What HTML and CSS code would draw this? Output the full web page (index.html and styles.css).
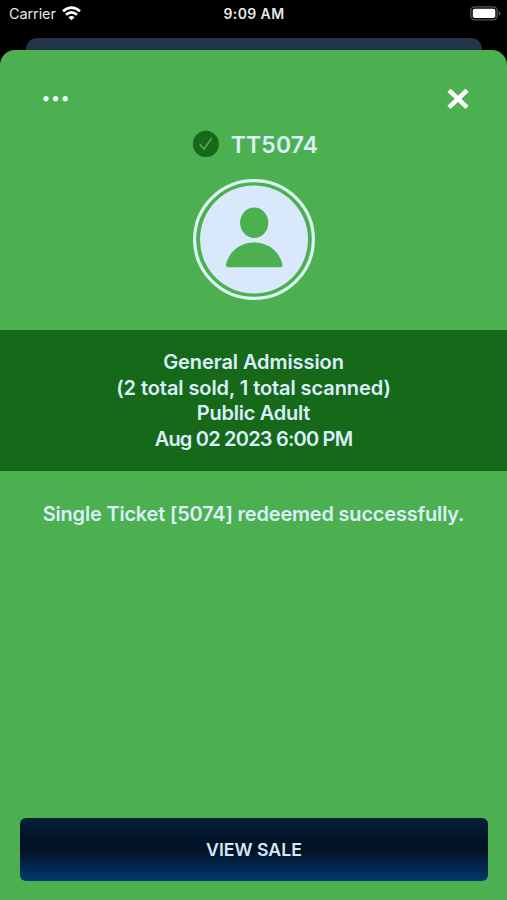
FILE: index.html
```html
<!DOCTYPE html>
<html lang="en">
<head>
<meta charset="utf-8">
<title>Ticket scan</title>
<link rel="stylesheet" href="styles.css">
</head>
<body>
<header class="status">
  <div class="carrier"><span>Carrier</span>
    <svg class="wifi" width="19" height="15" viewBox="0 0 19 15"><g fill="none" stroke="#fff" stroke-width="2.8"><path d="M1 5.300Q9.500-2 18 5.300"/><path d="M4 8.700Q9.500 4.100 15 8.700"/></g><path d="M6.400 11.200Q9.500 8.700 12.600 11.200L9.500 14.300Z" fill="#fff"/></svg>
  </div>
  <span class="time">9:09 AM</span>
  <svg class="battery" width="31" height="15" viewBox="0 0 31 15"><rect x=".8" y=".8" width="26.4" height="13" rx="3.8" fill="none" stroke="#555" stroke-width="1.3"/><rect x="2.8" y="2.7" width="22.5" height="9.3" rx="1.8" fill="#fff"/><path d="M28.800 5Q32 7.300 28.800 9.700Z" fill="#666"/></svg>
</header>
<div class="back-card"></div>
<main class="sheet">
  <div class="toolbar">
    <svg width="26" height="6" viewBox="0 0 26 6" fill="#e2f8fc"><circle cx="3" cy="2.700" r="2.700"/><circle cx="12.600" cy="2.700" r="2.700"/><circle cx="22.200" cy="2.700" r="2.700"/></svg>
    <svg width="22" height="20" viewBox="0 0 22 20"><path d="M2 1.300 20 18.300M20 1.300 2 18.300" stroke="#fff" stroke-width="4.600"/></svg>
  </div>
  <div class="ticket">
    <svg width="27" height="27" viewBox="0 0 27 27"><circle cx="13.900" cy="13.900" r="13.100" fill="#17691a"/><path d="M8.200 14.700 12.100 19.200 19.400 8.400" fill="none" stroke="#4caf50" stroke-width="1.600" stroke-linecap="round" stroke-linejoin="round"/></svg>
    <h1>TT5074</h1>
  </div>
  <svg class="avatar" width="122" height="121" viewBox="0 0 122 121"><ellipse cx="61" cy="60.500" rx="59.400" ry="58.900" fill="none" stroke="#d9f8f6" stroke-width="3.200"/><ellipse cx="61" cy="60.500" rx="54" ry="54" fill="#d9e9fb"/><ellipse cx="61.200" cy="43.800" rx="14.100" ry="15.200" fill="#4caf50"/><path d="M33 85.200C37 71 48 63.500 61.200 63.500S85.500 71 89.400 85.200Q90 88.300 87 88.300H35.500Q32.400 88.300 33 85.200Z" fill="#4caf50"/></svg>
  <section class="details">
    <p class="ticket-type">General Admission</p>
    <p class="counts">(2 total sold, 1 total scanned)</p>
    <p class="audience">Public Adult</p>
    <p class="date">Aug 02 2023 6:00 PM</p>
  </section>
  <p class="message">Single Ticket [5074] redeemed successfully.</p>
  <button class="sale">VIEW SALE</button>
</main>
</body>
</html>
```
FILE: styles.css
```css
* { box-sizing: border-box; }
body {
  margin: 0;
  width: 507px;
  height: 900px;
  display: flex;
  flex-direction: column;
  background: #000;
  color: #d9effa;
  font-family: Inter, "Liberation Sans", sans-serif;
  overflow: hidden;
}
p, h1 { margin: 0; white-space: nowrap; }
svg { display: block; flex: none; }
.status {
  height: 38px;
  padding: 5px 6px 0 9px;
  display: grid;
  grid-template-columns: 1fr auto 1fr;
  align-items: start;
  color: #e6e6e6;
  font-size: 14.5px;
  line-height: 18px;
}
.carrier { display: flex; gap: 6px; }
.carrier span { letter-spacing: -.1px; }
.time { font-weight: 600; font-size: 14px; letter-spacing: .4px; margin-right: 2px; }
.wifi { margin-top: 1px; }
.battery { justify-self: end; margin-top: 1px; }
.back-card {
  height: 12px;
  margin: 0 25px 0 26px;
  border-radius: 11px 11px 0 0;
  background: #23344a;
}
.sheet {
  flex: 1;
  display: flex;
  flex-direction: column;
  align-items: center;
  border-radius: 15px 15px 0 0;
  background: #4caf50;
}
.toolbar {
  align-self: stretch;
  display: flex;
  justify-content: space-between;
  align-items: center;
  height: 20px;
  margin: 39px 38px 0 43px;
}
.ticket {
  display: flex;
  align-items: center;
  gap: 12px;
  height: 27px;
  margin-top: 21px;
  margin-left: 3px;
}
h1 { font-size: 23px; font-weight: 600; line-height: 27px; padding-top: 3px; letter-spacing: .1px; }
.avatar { margin-top: 22px; }
.details {
  align-self: stretch;
  height: 141px;
  margin-top: 30px;
  padding-top: 20px;
  background: #17691a;
  text-align: center;
  font-size: 20px;
  font-weight: 600;
  line-height: 25.7px;
}
.ticket-type { letter-spacing: -.08px; }
.counts { letter-spacing: -.08px; }
.audience { letter-spacing: -.25px; }
.date { letter-spacing: -.8px; }
.message {
  margin-top: 30px;
  font-size: 20px;
  font-weight: 600;
  line-height: 26px;
  letter-spacing: -.2px;
}
.sale {
  align-self: stretch;
  height: 63px;
  margin: auto 19px 19px 20px;
  border: 0;
  border-radius: 6px;
  background: linear-gradient(#032238, #02142a 30%, #021322 50%, #03234a 75%, #043a6d);
  color: #d5e5fa;
  font: 600 17.7px Inter, "Liberation Sans", sans-serif;
}
```
